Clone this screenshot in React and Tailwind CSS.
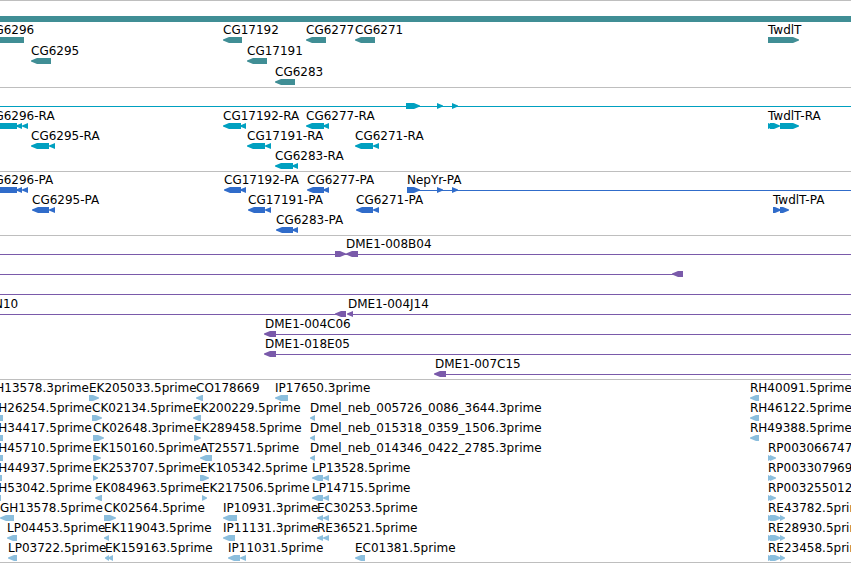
import React from "react";
import clsx from "clsx";

// f(start, label, parts): one feature, its label starts at the feature start
// part: [start, end, direction]
const f = (start, label, ...parts) => ({ start, label, parts });
// line(from, to): connector, "100%" runs to the edge of the view
const line = (from, to) => ({ from, to });

const L = "left";
const R = "right";

const TRACKS = [
  {
    name: "Genes",
    color: "text-[#408e95]",
    rowClass: "h-[21px]",
    trackClass: "py-px",
    rows: [
      { bar: true },
      {
        features: [
          f(-14, "CG6296", [-14, 24, L]),
          f(223, "CG17192", [223, 242, L]),
          f(306, "CG6277", [306, 326, L]),
          f(355, "CG6271", [355, 375, L]),
          f(768, "TwdlT", [768, 799, R]),
        ],
      },
      { features: [f(31, "CG6295", [31, 51, L]), f(247, "CG17191", [247, 267, L])] },
      { features: [f(275, "CG6283", [275, 295, L])] },
    ],
  },
  {
    name: "Transcripts",
    color: "text-[#00a0c0]",
    rowClass: "h-5",
    trackClass: "pt-px pb-0.5",
    rows: [
      {
        lines: [line(0, "100%")],
        features: [f(406, null, [406, 420, R], [437, 443, R], [452, 458, R])],
      },
      {
        features: [
          f(-14, "CG6296-RA", [-14, 17, L], [16, 22, L], [22, 28, L]),
          f(223, "CG17192-RA", [223, 241, L], [240, 246, L]),
          f(306, "CG6277-RA", [306, 324, L], [323, 329, L]),
          f(768, "TwdlT-RA", [768, 774, R], [770, 780, R], [780, 799, R]),
        ],
      },
      {
        features: [
          f(31, "CG6295-RA", [31, 49, L], [49, 55, L]),
          f(247, "CG17191-RA", [247, 265, L], [265, 271, L]),
          f(355, "CG6271-RA", [355, 373, L], [373, 379, L]),
        ],
      },
      { features: [f(275, "CG6283-RA", [275, 293, L], [292, 298, L])] },
    ],
  },
  {
    name: "Proteins",
    color: "text-[#306cca]",
    rowClass: "h-5",
    trackClass: "pt-px pb-0.5",
    rows: [
      {
        lines: [line(407, "100%")],
        features: [
          f(-14, "CG6296-PA", [-14, 17, L], [16, 22, L], [22, 28, L]),
          f(224, "CG17192-PA", [224, 241, L], [240, 246, L]),
          f(307, "CG6277-PA", [307, 324, L], [323, 329, L]),
          f(407, "NepYr-PA", [407, 420, R], [437, 443, R], [452, 458, R]),
        ],
      },
      {
        features: [
          f(32, "CG6295-PA", [32, 49, L], [49, 55, L]),
          f(248, "CG17191-PA", [248, 265, L], [265, 271, L]),
          f(356, "CG6271-PA", [356, 373, L], [373, 379, L]),
          f(773, "TwdlT-PA", [773, 781, R], [780, 789, R]),
        ],
      },
      { features: [f(276, "CG6283-PA", [276, 293, L], [292, 298, L])] },
    ],
  },
  {
    name: "BAC ends",
    color: "text-[#7a5aaa]",
    rowClass: "h-5",
    trackClass: "pt-px pb-0.5",
    rows: [
      {
        lines: [line(0, "100%")],
        features: [f(346, "DME1-008B04", [335, 346, R], [346, 358, L])],
      },
      { lines: [line(0, 674)], features: [f(672, null, [672, 683, L])] },
      { lines: [line(0, "100%")] },
      {
        lines: [line(0, 337), line(351, "100%")],
        features: [f(-6, "N10", [335, 346, L]), f(348, "DME1-004J14", [347, 353, L])],
      },
      { lines: [line(268, "100%")], features: [f(265, "DME1-004C06", [264, 276, L])] },
      { lines: [line(268, "100%")], features: [f(265, "DME1-018E05", [264, 276, L])] },
      { lines: [line(438, "100%")], features: [f(435, "DME1-007C15", [434, 446, L])] },
    ],
  },
  {
    name: "ESTs",
    color: "text-[#8bbedd]",
    rowClass: "h-5",
    trackClass: "py-px",
    rows: [
      {
        features: [
          f(-14, "GH13578.3prime"),
          f(89, "EK205033.5prime", [89, 99, R]),
          f(196, "CO178669", [196, 203, L]),
          f(275, "IP17650.3prime", [275, 288, L]),
          f(750, "RH40091.5prime", [750, 759, L]),
        ],
      },
      {
        features: [
          f(-11, "GH26254.5prime", [-11, 3, L]),
          f(92, "CK02134.5prime", [92, 102, R]),
          f(193, "EK200229.5prime", [193, 201, L]),
          f(310, "Dmel_neb_005726_0086_3644.3prime", [310, 315, L]),
          f(750, "RH46122.5prime", [750, 759, L]),
        ],
      },
      {
        features: [
          f(-11, "GH34417.5prime", [-11, 3, L]),
          f(93, "CK02648.3prime", [93, 104, R]),
          f(194, "EK289458.5prime", [194, 201, R]),
          f(310, "Dmel_neb_015318_0359_1506.3prime", [310, 315, L]),
          f(750, "RH49388.5prime", [750, 759, L]),
        ],
      },
      {
        features: [
          f(-11, "GH45710.5prime", [-11, 3, L]),
          f(93, "EK150160.5prime", [93, 101, R]),
          f(200, "AT25571.5prime", [200, 212, L]),
          f(310, "Dmel_neb_014346_0422_2785.3prime", [310, 315, L]),
          f(768, "RP003066747", [768, 773, R], [770, 776, R]),
        ],
      },
      {
        features: [
          f(-11, "GH44937.5prime", [-11, 2, L]),
          f(93, "EK253707.5prime", [93, 98, R]),
          f(200, "EK105342.5prime", [200, 209, R]),
          f(312, "LP13528.5prime", [312, 323, L], [323, 329, L]),
          f(768, "RP003307969", [768, 773, R], [770, 776, R]),
        ],
      },
      {
        features: [
          f(-11, "GH53042.5prime", [-11, 1, L]),
          f(95, "EK084963.5prime", [95, 102, L]),
          f(202, "EK217506.5prime", [202, 207, R]),
          f(312, "LP14715.5prime", [312, 323, L], [323, 329, L]),
          f(768, "RP003255012", [768, 773, R], [770, 776, R]),
        ],
      },
      {
        features: [
          f(0, "GH13578.5prime", [0, 14, L]),
          f(104, "CK02564.5prime", [104, 116, R]),
          f(223, "IP10931.3prime", [223, 237, L]),
          f(317, "EC30253.5prime", [317, 323, L], [323, 329, L]),
          f(768, "RE43782.5prime", [768, 774, R], [770, 781, R], [780, 785, R]),
        ],
      },
      {
        features: [
          f(7, "LP04453.5prime", [7, 17, L]),
          f(104, "EK119043.5prime", [104, 109, L]),
          f(223, "IP11131.3prime", [223, 235, L]),
          f(317, "RE36521.5prime", [317, 323, L], [323, 329, L]),
          f(768, "RE28930.5prime", [768, 774, R], [770, 781, R], [780, 785, R]),
        ],
      },
      {
        features: [
          f(8, "LP03722.5prime", [8, 17, L]),
          f(105, "EK159163.5prime", [105, 109, L], [108, 113, L]),
          f(228, "IP11031.5prime", [228, 240, L], [240, 246, L]),
          f(355, "EC01381.5prime", [355, 365, L]),
          f(768, "RE23458.5prime", [768, 774, R], [770, 781, R], [780, 785, R]),
        ],
      },
    ],
  },
];

const arrowPoints = ([start, end, dir]) => {
  const tip = Math.min(6, end - start);
  return dir === L
    ? `${start},2.5 ${start + tip},0 ${end},0 ${end},6 ${start + tip},6 ${start},3.5`
    : `${end},2.5 ${end - tip},0 ${start},0 ${start},6 ${end - tip},6 ${end},3.5`;
};

const Row = ({ row, className }) => {
  const features = row.features || [];
  return (
    <div className={clsx("relative flex flex-col overflow-hidden", className)}>
      <div className="h-3.5">
        {features
          .filter((x) => x.label)
          .map((x) => (
            <span
              key={x.label}
              className="absolute top-0 whitespace-nowrap text-xs leading-[14px] text-black"
              style={{ left: x.start }}
            >
              {x.label}
            </span>
          ))}
      </div>
      <svg className="block h-1.5 w-full" fill="currentColor" aria-hidden="true">
        {row.bar && <rect width="100%" height="6" />}
        {(row.lines || []).map(({ from, to }) => (
          <line
            key={from}
            x1={from}
            x2={to}
            y1="3.5"
            y2="3.5"
            stroke="currentColor"
            shapeRendering="crispEdges"
          />
        ))}
        {features.flatMap((x) =>
          x.parts.map((part) => <polygon key={part.join()} points={arrowPoints(part)} />)
        )}
      </svg>
    </div>
  );
};

const App = () => (
  <main className="w-full overflow-hidden border-b border-[#bebebe] bg-white font-['DejaVu_Sans',sans-serif]">
    {TRACKS.map((track) => (
      <section
        key={track.name}
        aria-label={track.name}
        className={clsx("border-t border-[#bebebe]", track.color, track.trackClass)}
      >
        {track.rows.map((row, i) => (
          <Row key={i} row={row} className={track.rowClass} />
        ))}
      </section>
    ))}
  </main>
);

export default App;
